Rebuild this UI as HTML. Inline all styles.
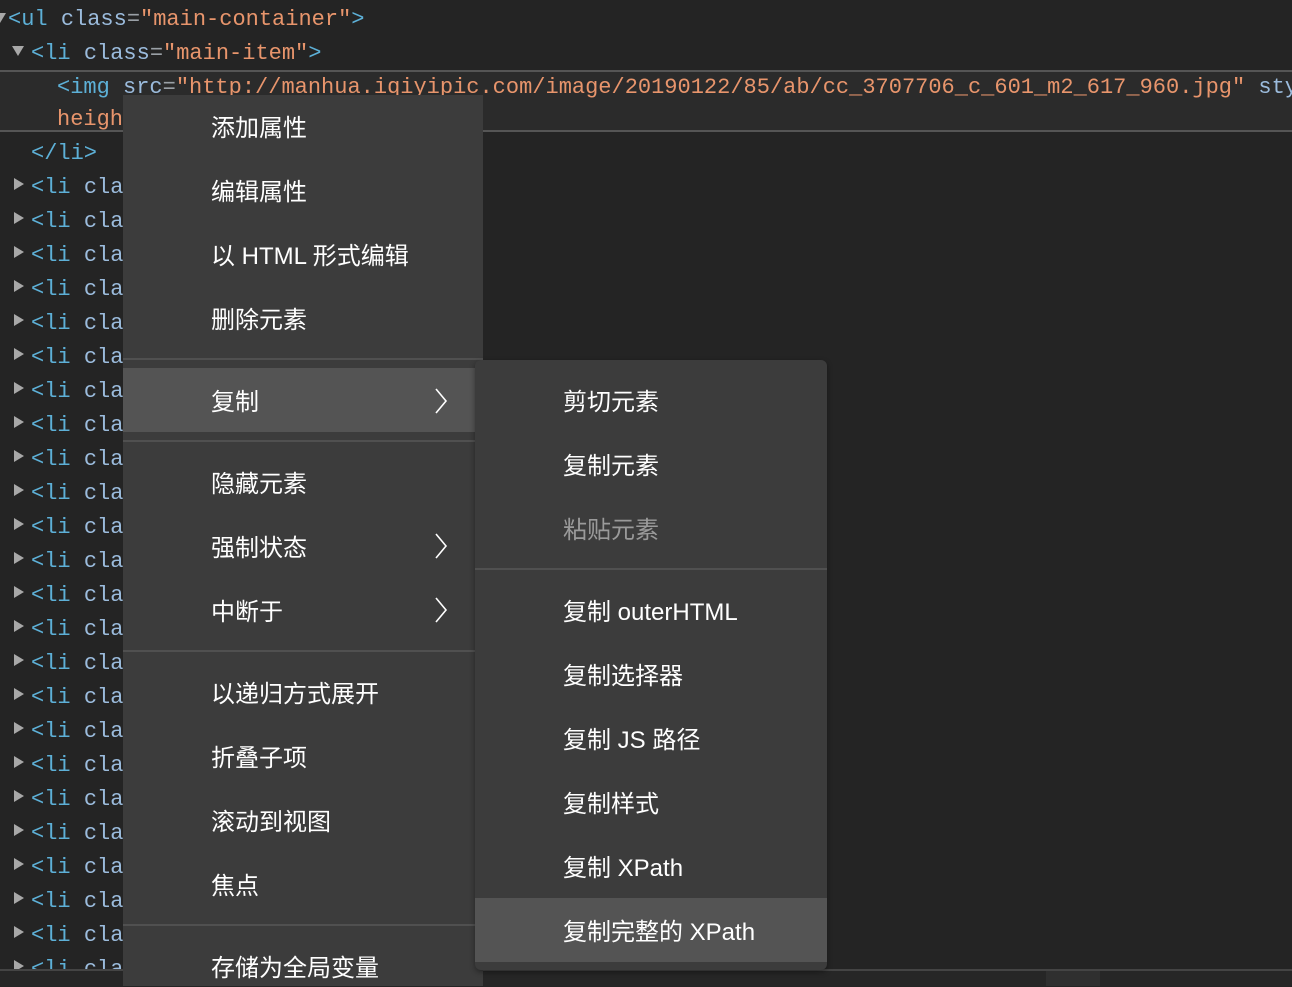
<!DOCTYPE html>
<html><head><meta charset="utf-8">
<style>
*{margin:0;padding:0;box-sizing:border-box}
html,body{width:1292px;height:986px;overflow:hidden;background:#242424}
.code{position:absolute;left:0;height:34px;line-height:34px;font-family:"Liberation Mono",monospace;font-size:22px;white-space:pre;color:#9bbbdc}
.t{color:#5db0d7}.a{color:#9bbbdc}.v{color:#e8956c}.p{color:#9aa0a6}
.tri{position:absolute;width:0;height:0;border-top:6px solid transparent;border-bottom:6px solid transparent;border-left:10px solid #a8a8a8}
.trid{position:absolute;width:0;height:0;border-left:6px solid transparent;border-right:6px solid transparent;border-top:10px solid #a8a8a8}
.menu{position:absolute;background:#3c3c3c}
.it{position:absolute;font-family:"Liberation Sans","Noto Sans CJK SC",sans-serif;font-size:24px;color:#fff;line-height:30px;white-space:nowrap}
.sep{position:absolute;height:2px;background:#505050}
.hl{position:absolute;background:#545454}
.arr{position:absolute;width:14px;height:30px}
</style></head><body>
<div style="position:absolute;left:0;top:70px;width:1292px;height:62px;background:#2b2b2b;border-top:2px solid #555;border-bottom:2px solid #555"></div>
<div class="trid" style="left:-6px;top:13px"></div>
<div class="code" style="top:3px;left:8px"><span class="t">&lt;ul</span> <span class="a">class</span><span class="p">=</span><span class="v">"main-container"</span><span class="t">&gt;</span></div>
<div class="trid" style="left:12px;top:46px"></div>
<div class="code" style="top:37px;left:31px"><span class="t">&lt;li</span> <span class="a">class</span><span class="p">=</span><span class="v">"main-item"</span><span class="t">&gt;</span></div>
<div class="code" style="top:71px;left:57px"><span class="t">&lt;img</span> <span class="a">src</span><span class="p">=</span><span class="v">"http://manhua.iqiyipic.com/image/20190122/85/ab/cc_3707706_c_601_m2_617_960.jpg"</span> <span class="a">sty</span></div>
<div class="code" style="top:103px;left:57px"><span class="v">heigh</span></div>
<div class="code" style="top:137px;left:31px"><span class="t">&lt;/li&gt;</span></div>
<div id="rows"></div>
<script>
var h='';for(var k=0;k<24;k++){var c=186+34*k;h+='<div class="tri" style="left:14px;top:'+(c-8)+'px"></div><div class="code" style="top:'+(c-15)+'px;left:31px"><span class="t">&lt;li</span> <span class="a">cla</span></div>';}
document.getElementById('rows').innerHTML=h;
</script>
<div style="position:absolute;left:0;top:969px;width:1292px;height:17px;background:#262626;border-top:2px solid #444"></div>
<div style="position:absolute;left:1046px;top:971px;width:54px;height:15px;background:#2f2f2f"></div>

<div class="menu" style="left:123px;top:95px;width:360px;height:891px"></div>
<div class="it" style="left:211px;top:114px">添加属性</div>
<div class="it" style="left:211px;top:178px">编辑属性</div>
<div class="it" style="left:211px;top:242px">以 HTML 形式编辑</div>
<div class="it" style="left:211px;top:306px">删除元素</div>
<div class="sep" style="left:123px;top:358px;width:360px"></div>
<div class="hl" style="left:123px;top:368px;width:352px;height:64px"></div>
<div class="it" style="left:211px;top:388px">复制</div>
<svg class="arr" style="left:434px;top:386px" viewBox="0 0 14 30"><path d="M2 3 L12 15 L2 27" fill="none" stroke="#fff" stroke-width="1.6"/></svg>
<div class="sep" style="left:123px;top:440px;width:352px"></div>
<div class="it" style="left:211px;top:470px">隐藏元素</div>
<div class="it" style="left:211px;top:534px">强制状态</div>
<svg class="arr" style="left:434px;top:531px" viewBox="0 0 14 30"><path d="M2 3 L12 15 L2 27" fill="none" stroke="#fff" stroke-width="1.6"/></svg>
<div class="it" style="left:211px;top:598px">中断于</div>
<svg class="arr" style="left:434px;top:595px" viewBox="0 0 14 30"><path d="M2 3 L12 15 L2 27" fill="none" stroke="#fff" stroke-width="1.6"/></svg>
<div class="sep" style="left:123px;top:650px;width:352px"></div>
<div class="it" style="left:211px;top:680px">以递归方式展开</div>
<div class="it" style="left:211px;top:744px">折叠子项</div>
<div class="it" style="left:211px;top:808px">滚动到视图</div>
<div class="it" style="left:211px;top:872px">焦点</div>
<div class="sep" style="left:123px;top:924px;width:352px"></div>
<div class="it" style="left:211px;top:954px">存储为全局变量</div>

<div class="menu" style="left:475px;top:360px;width:352px;height:610px;border-radius:6px;box-shadow:0 2px 6px rgba(0,0,0,.4)"></div>
<div class="it" style="left:563px;top:388px">剪切元素</div>
<div class="it" style="left:563px;top:452px">复制元素</div>
<div class="it" style="left:563px;top:516px;color:#9a9a9a">粘贴元素</div>
<div class="sep" style="left:475px;top:568px;width:352px"></div>
<div class="it" style="left:563px;top:598px">复制 outerHTML</div>
<div class="it" style="left:563px;top:662px">复制选择器</div>
<div class="it" style="left:563px;top:726px">复制 JS 路径</div>
<div class="it" style="left:563px;top:790px">复制样式</div>
<div class="it" style="left:563px;top:854px">复制 XPath</div>
<div class="hl" style="left:475px;top:898px;width:352px;height:64px"></div>
<div class="it" style="left:563px;top:918px">复制完整的 XPath</div>
</body></html>
